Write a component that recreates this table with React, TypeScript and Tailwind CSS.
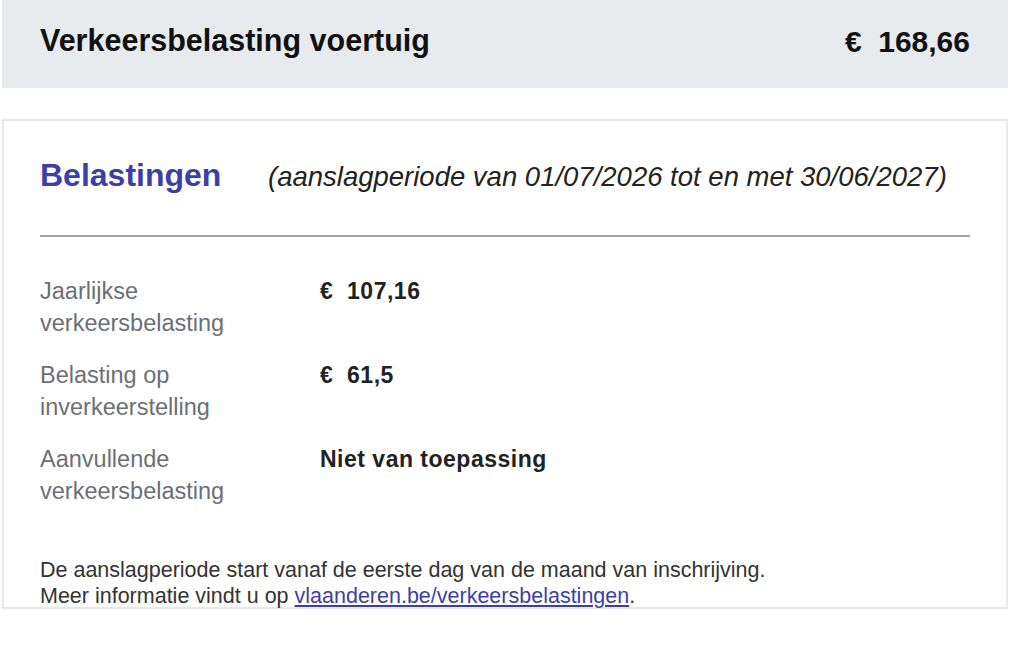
import React from 'react';

const rows = [
  { label: ['Jaarlijkse', 'verkeersbelasting'], value: '€  107,16' },
  { label: ['Belasting op', 'inverkeerstelling'], value: '€  61,5' },
  { label: ['Aanvullende', 'verkeersbelasting'], value: 'Niet van toepassing' },
];

const App = () => {
  return (
    <div className="w-[1024px] h-[661px] bg-white font-['Liberation_Sans',sans-serif]">
      <div className="ml-[2px] w-[1006px]">
        {/* Totaal */}
        <div className="h-[88px] bg-[#e8ebee] flex items-center justify-between pl-[38px] pr-[38px] pb-[6px]">
          <h1 className="text-[30.5px] font-bold text-[#111]">Verkeersbelasting voertuig</h1>
          <span className="text-[30px] font-bold text-[#111] whitespace-pre">€  168,66</span>
        </div>

        {/* Belastingen */}
        <div className="mt-[31px] h-[490px] border-2 border-[#e8e8e8] px-[36px] pt-[30px]">
          <div className="flex items-baseline">
            <h2 className="text-[32px] font-bold text-[#3d3fa6] w-[228px]">Belastingen</h2>
            <span className="text-[27.5px] italic text-[#222]">(aanslagperiode van 01/07/2026 tot en met 30/06/2027)</span>
          </div>
          <div className="mt-[36px] h-[2px] bg-[#a3a3a3] w-[930px]" />

          <div className="mt-[38px] flex flex-col gap-[20px]">
            {rows.map((row, i) => (
              <div key={i} className="flex">
                <div className="w-[280px] text-[23.5px] leading-[32px] text-[#6b6f76]">
                  {row.label.map((l, j) => (
                    <div key={j}>{l}</div>
                  ))}
                </div>
                <div className="text-[23px] leading-[32px] font-bold text-[#222] whitespace-pre tracking-[0.5px]">{row.value}</div>
              </div>
            ))}
          </div>

          <div className="mt-[50px] text-[21.5px] leading-[26px] text-[#333]">
            <p>De aanslagperiode start vanaf de eerste dag van de maand van inschrijving.</p>
            <p>
              Meer informatie vindt u op{' '}
              <a href="#" className="text-[#3d3fa6] underline">vlaanderen.be/verkeersbelastingen</a>.
            </p>
          </div>
        </div>
      </div>
    </div>
  );
};

export default App;
